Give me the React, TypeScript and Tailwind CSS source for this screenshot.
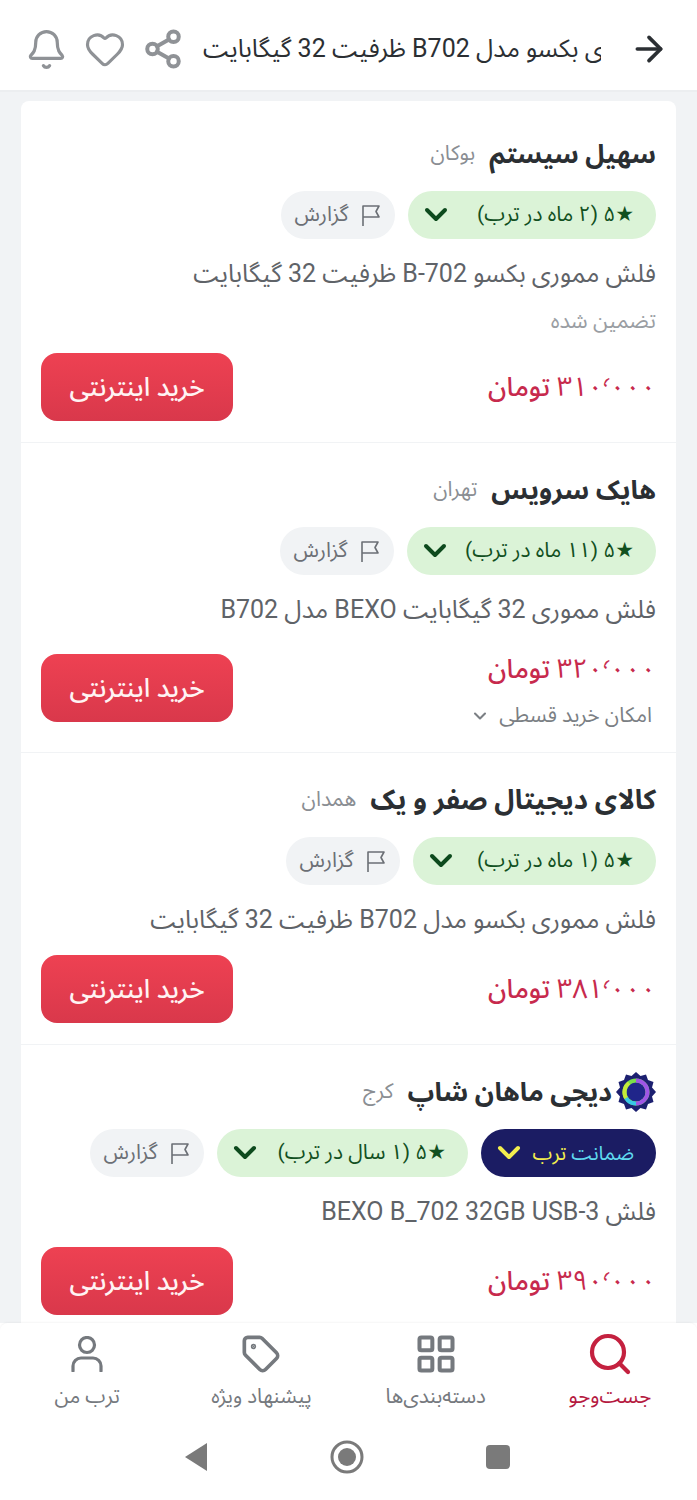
import React from "react";
import { ArrowRight, Bell, ChevronDown, Heart, LayoutGrid, Search, Share2, Tag } from "lucide-react";

const font = "font-['Roboto','Noto_Sans_Arabic','DejaVu_Sans',sans-serif]";

function FlagIcon() {
  return (
    <svg width="20" height="24" viewBox="0 0 20 24" fill="none" stroke="currentColor" strokeWidth="1.6" strokeLinejoin="round" className="shrink-0">
      <path d="M2 23V3h16l-3 5.5 3 5.5H2" />
    </svg>
  );
}

function Chevron({ className }: { className: string }) {
  return (
    <svg width="24" height="16" viewBox="0 0 24 16" fill="none" stroke="currentColor" strokeWidth="4" strokeLinecap="round" strokeLinejoin="round" className={`shrink-0 ${className}`}>
      <path d="M3 3l9 9 9-9" />
    </svg>
  );
}

function Report() {
  return (
    <div className="flex h-12 w-[114px] items-center justify-center gap-[13px] rounded-full bg-[#f1f3f5] text-[21px] text-[#6b6f75]">
      <FlagIcon />
      <span>گزارش</span>
    </div>
  );
}

function Rating({ text, w }: { text: string; w: string }) {
  return (
    <div className={`flex h-12 items-center justify-between rounded-full bg-[#dbf3d7] pr-[22px] pl-4 text-[21px] text-[#12501f] ${w}`}>
      <span>★۵ ({text})</span>
      <Chevron className="text-[#0d4a1d]" />
    </div>
  );
}

function Logo() {
  return (
    <svg width="40" height="40" viewBox="0 0 40 40">
      <path d="M20 0l4.500 4 5.500-1.500 2 5.500 5.500 2-1.500 5.500L40 20l-4 4.500 1.500 5.500-5.500 2-2 5.500-5.500-1.500L20 40l-4.500-4-5.500 1.500-2-5.500-5.500-2 1.500-5.500L0 20l4-4.500L2.500 10 8 8l2-5.500L15.500 4z" fill="#1c2070" />
      <circle cx="20" cy="20" r="11.500" fill="#20258a" stroke="#7be04a" strokeWidth="4" />
      <path d="M20 8.500a11.500 11.500 0 0 1 0 23" fill="none" stroke="#9f55e6" strokeWidth="4" />
      <path d="M10 26a11.500 11.500 0 0 0 10 5.500" fill="none" stroke="#38c8e8" strokeWidth="4" />
      <path d="M13 11a11.500 11.500 0 0 0-3 15" fill="none" stroke="#c6ea3a" strokeWidth="4" />
    </svg>
  );
}

type Row = {
  name: string;
  nameSize: string;
  city: string;
  time: string;
  ratingW: string;
  desc: string;
  digits: string;
  top: string;
  bottom: string;
  bottomGap: string;
  logo?: boolean;
  guarantee?: boolean;
  extra?: string;
  installment?: boolean;
  border?: boolean;
};

const rows: Row[] = [
  { name: "سهیل سیستم", nameSize: "text-[26px]", city: "بوکان", time: "۲ ماه در ترب", ratingW: "w-[248px]", desc: "فلش مموری بکسو B-702 ظرفیت 32 گیگابایت", digits: "۳۱۰٬۰۰۰", top: "pt-[35px]", bottom: "pb-[21px]", bottomGap: "mt-[15px]", extra: "تضمین شده", border: true },
  { name: "هایک سرویس", nameSize: "text-[26.500px]", city: "تهران", time: "۱۱ ماه در ترب", ratingW: "w-[249px]", desc: "فلش مموری 32 گیگابایت BEXO مدل B702", digits: "۳۲۰٬۰۰۰", top: "pt-[29px]", bottom: "pb-[18px]", bottomGap: "mt-[27px]", installment: true, border: true },
  { name: "کالای دیجیتال صفر و یک", nameSize: "text-[27.500px]", city: "همدان", time: "۱ ماه در ترب", ratingW: "w-[243px]", desc: "فلش مموری بکسو مدل B702 ظرفیت 32 گیگابایت", digits: "۳۸۱٬۰۰۰", top: "pt-[29px]", bottom: "pb-[21px]", bottomGap: "mt-[18px]", border: true },
  { name: "دیجی ماهان شاپ", nameSize: "text-[26.500px]", city: "کرج", time: "۱ سال در ترب", ratingW: "w-[251px]", desc: "فلش BEXO B_702 32GB USB-3", digits: "۳۹۰٬۰۰۰", top: "pt-[29px]", bottom: "pb-[21px]", bottomGap: "mt-[18px]", logo: true, guarantee: true },
];

function Offer({ r }: { r: Row }) {
  return (
    <section className={`px-5 ${r.top} ${r.bottom} ${r.border ? "border-b border-[#f1f3f5]" : ""}`}>
      <div className="flex h-9 items-center gap-[14px]">
        <div className="flex items-center gap-1">
          {r.logo && <Logo />}
          <h2 className={`font-bold leading-9 text-[#2b2f33] ${r.nameSize}`}>{r.name}</h2>
        </div>
        <span className="text-[21px] text-[#8a8e93]">{r.city}</span>
      </div>
      <div className="mt-[19px] flex gap-[13px]">
        {r.guarantee && (
          <div className="flex h-12 w-[175px] items-center justify-between rounded-full bg-[#1b1c63] pr-[22px] pl-4 text-[20px]">
            <span><span className="text-[#5fd8ee]">ضمانت </span><span className="text-[#f3ee4e]">ترب</span></span>
            <Chevron className="text-[#f3ee4e]" />
          </div>
        )}
        <Rating text={r.time} w={r.ratingW} />
        <Report />
      </div>
      <p className="mt-[18px] text-[25px] leading-[34px] text-[#5f6368]">{r.desc}</p>
      {r.extra && <p className="mt-[13px] text-[21.500px] leading-[34px] text-[#9a9ea3]">{r.extra}</p>}
      <div className={`flex items-start justify-between ${r.bottomGap}`}>
        <div className={`flex flex-col ${r.installment ? "" : "h-[68px] justify-center"}`}>
          <div className={`text-[26.500px] font-medium leading-9 text-[#c72a4d] ${r.installment ? "mt-[-3px]" : ""}`}>
            <span className="text-[27px] font-normal">{r.digits}</span> تومان
          </div>
          {r.installment && (
            <div className="mt-[11px] mr-[4px] flex h-9 items-center gap-[9px] text-[21px] text-[#7b7f84]">
              <span>امکان خرید قسطی</span>
              <ChevronDown size={20} strokeWidth={2.500} />
            </div>
          )}
        </div>
        <button className="h-[68px] w-[192px] rounded-2xl bg-gradient-to-b from-[#ee4152] to-[#d9384b] text-[26px] font-medium text-[#fff3f3]">
          خرید اینترنتی
        </button>
      </div>
    </section>
  );
}

function NavItem({ icon, label, active }: { icon: React.ReactNode; label: string; active?: boolean }) {
  return (
    <div className="flex flex-col items-center">
      <div className={`flex h-10 items-center justify-center ${active ? "text-[#c4213f]" : "text-[#75797e]"}`}>{icon}</div>
      <span className={`mt-2 whitespace-nowrap text-[20.500px] leading-7 ${active ? "text-[#b5193f]" : "text-[#75797e]"}`}>{label}</span>
    </div>
  );
}

function UserIcon() {
  return (
    <svg width="32" height="36" viewBox="0 0 32 36" fill="none" stroke="currentColor" strokeWidth="3.200" strokeLinecap="round">
      <circle cx="16" cy="9" r="7.500" />
      <path d="M2 35v-5a8 8 0 0 1 8-8h12a8 8 0 0 1 8 8v5" />
    </svg>
  );
}

export default function App() {
  return (
    <div dir="rtl" className={`flex h-[1500px] w-[697px] flex-col overflow-hidden bg-white ${font}`}>
      <header className="flex h-[92px] shrink-0 items-center border-b-2 border-[#eceef0] pr-[28px] pl-[17px] pt-[8px]">
        <ArrowRight size={40} strokeWidth={2.200} className="shrink-0 text-[#2b2f33]" />
        <div dir="ltr" className="mr-[28px] w-[398px] shrink-0 overflow-hidden">
          <div dir="rtl" className="w-max whitespace-nowrap text-[25px] text-[#2b2f33]">فلش مموری بکسو مدل B702 ظرفیت 32 گیگابایت</div>
        </div>
        <div className="mr-[11px] flex items-center text-[#8f9296]">
          <div className="flex w-[58px] justify-center"><Share2 size={42} strokeWidth={2.300} /></div>
          <div className="flex w-[59px] justify-center"><Heart size={42} strokeWidth={1.800} /></div>
          <div className="flex w-[58px] justify-center"><Bell size={43} strokeWidth={1.800} /></div>
        </div>
      </header>
      <main className="min-h-0 flex-1 overflow-hidden bg-[#f1f3f5] px-[21px] pt-[9px]">
        <div className="overflow-hidden rounded-t-lg bg-white">
          {rows.map((r) => <Offer key={r.name} r={r} />)}
        </div>
      </main>
      <nav className="grid h-[95px] shrink-0 grid-cols-4 rounded-t-lg bg-white pt-[11px] shadow-[0_-1px_2px_rgba(0,0,0,0.04)]">
        <NavItem active label="جست‌وجو" icon={<Search size={48} strokeWidth={2.100} />} />
        <NavItem label="دسته‌بندی‌ها" icon={<LayoutGrid size={44} strokeWidth={2.200} />} />
        <NavItem label="پیشنهاد ویژه" icon={<Tag size={40} strokeWidth={2.200} />} />
        <NavItem label="ترب من" icon={<UserIcon />} />
      </nav>
      <div dir="ltr" className="flex h-[82px] shrink-0 items-center justify-center gap-[122px] bg-white pb-[4px] pr-[4px]">
        <svg width="24" height="30" viewBox="0 0 24 30"><path d="M23 1v28L1 15z" fill="#7a7a7a" /></svg>
        <svg width="34" height="34" viewBox="0 0 34 34"><circle cx="17" cy="17" r="15" fill="none" stroke="#7a7a7a" strokeWidth="3" /><circle cx="17" cy="17" r="9" fill="#7a7a7a" /></svg>
        <div className="h-6 w-6 rounded bg-[#7a7a7a]" />
      </div>
    </div>
  );
}
